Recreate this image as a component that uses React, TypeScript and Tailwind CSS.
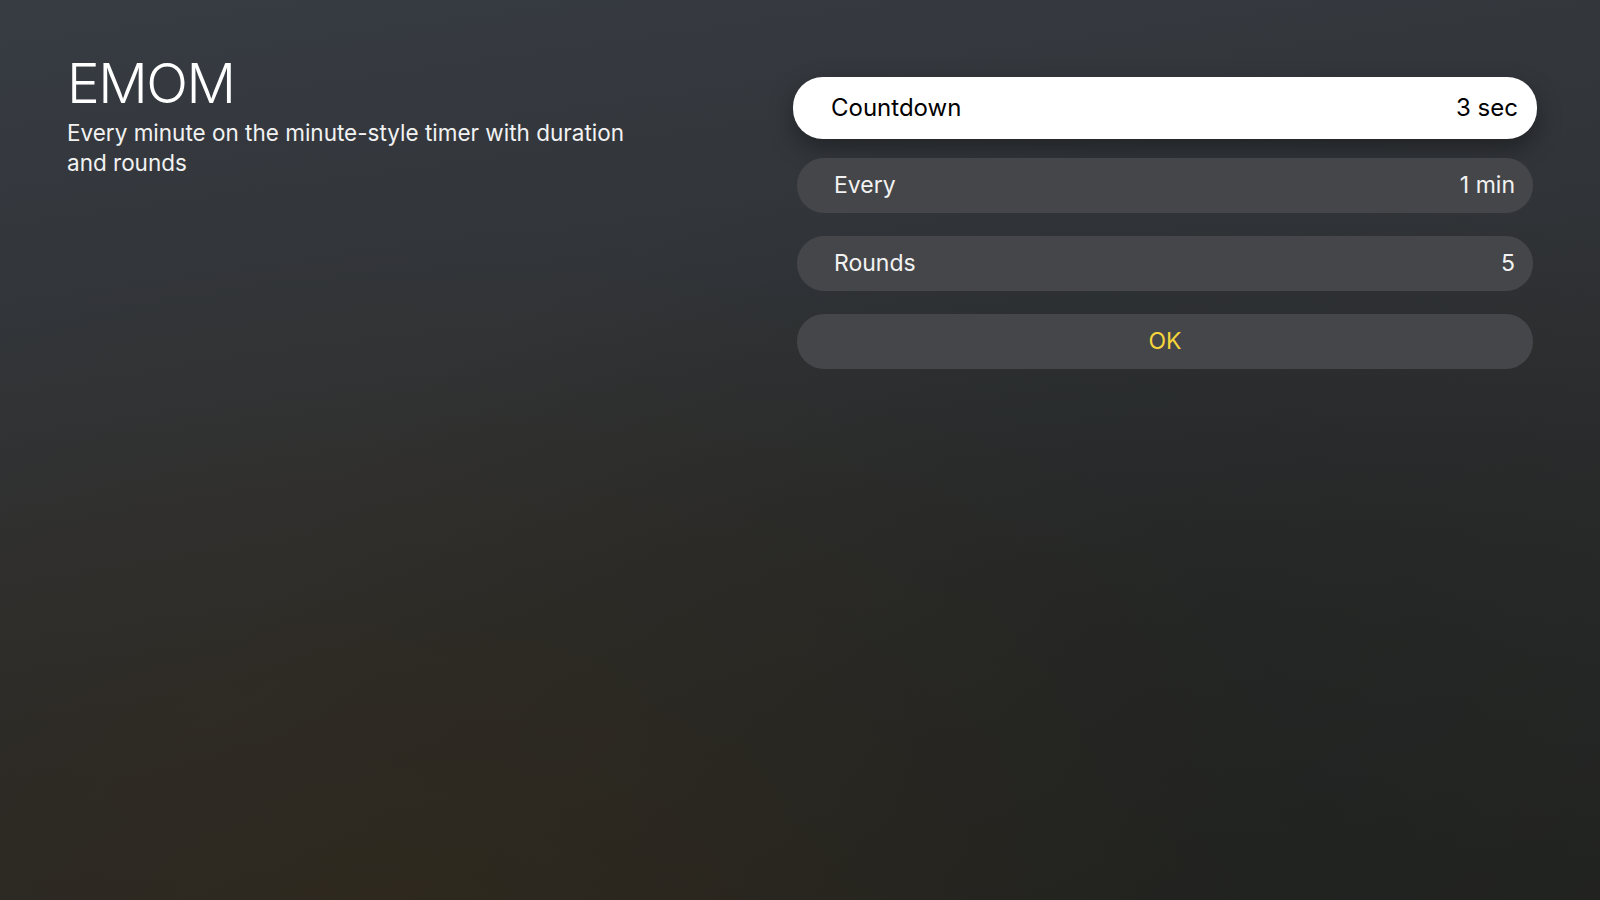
const rows = [
  { label: 'Every', value: '1 min' },
  { label: 'Rounds', value: '5' },
]

export default function App() {
  const font = { fontFamily: 'Inter, "Noto Sans", sans-serif' }

  return (
    <div
      style={font}
      className="w-[1600px] h-[900px] overflow-hidden flex bg-[radial-gradient(ellipse_at_25%_105%,rgba(58,44,22,0.45),transparent_55%),radial-gradient(ellipse_at_70%_100%,rgba(28,32,30,0.6),transparent_60%),linear-gradient(172deg,#373c43_0%,#313438_35%,#2a2b2b_65%,#242422_100%)]"
    >
      {/* left: title + description */}
      <div className="w-[730px] pl-[67px] pt-[56px] shrink-0">
        <h1 className="text-[55px] leading-none text-white font-light tracking-[-1.5px]">EMOM</h1>
        <p className="mt-[7px] w-[592px] text-[22.5px] leading-[29.5px] text-[#f2f2f2]">
          Every minute on the minute-style timer with duration and rounds
        </p>
      </div>

      {/* right: settings list */}
      <div className="ml-[67px] pt-[80px] w-[736px] flex flex-col gap-[23px]">
        <div className="h-[55px] flex">
          <div className="-my-[3.5px] -mx-[4px] h-[62px] flex-1 rounded-[30px] bg-white flex items-center pl-[38px] pr-[19px] shadow-[0_10px_24px_rgba(0,0,0,0.35)]">
            <span className="text-[24px] text-black">Countdown</span>
            <span className="ml-auto text-[24px] text-black">3 sec</span>
          </div>
        </div>
        {rows.map((r) => (
          <div key={r.label} className="h-[55px] rounded-[27px] bg-[#454649] flex items-center pl-[37px] pr-[18px]">
            <span className="text-[23px] text-[#f2f2f2]">{r.label}</span>
            <span className="ml-auto text-[23px] text-[#f2f2f2]">{r.value}</span>
          </div>
        ))}
        <div className="h-[55px] rounded-[27px] bg-[#454649] flex items-center justify-center">
          <span className="text-[23px] text-[#f5d53b]">OK</span>
        </div>
      </div>
    </div>
  )
}
